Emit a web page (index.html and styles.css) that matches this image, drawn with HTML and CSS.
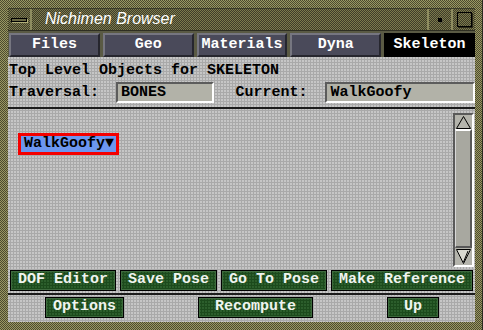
FILE: index.html
```html
<!DOCTYPE html>
<html>
<head>
    <link rel="stylesheet" href="styles.css">
</head>
<body>
<div class="frame">
    <div class="titlebar">
        <div class="menu-btn"><span class="dash"></span></div>
        <div class="title">Nichimen Browser</div>
        <div class="min-btn"><span class="dot"></span></div>
        <div class="max-btn"><span class="box"></span></div>
    </div>

    <div class="tabs">
        <div class="tab">Files</div>
        <div class="tab">Geo</div>
        <div class="tab">Materials</div>
        <div class="tab">Dyna</div>
        <div class="tab active">Skeleton</div>
    </div>

    <div class="panel">
        <div class="heading">Top Level Objects for SKELETON</div>
        <div class="fields">
            <span class="label">Traversal:</span>
            <div class="field traversal">BONES</div>
            <span class="label current">Current:</span>
            <div class="field current-value">WalkGoofy</div>
        </div>
        <div class="rule"></div>

        <div class="list">
            <div class="objects">
                <div class="node">WalkGoofy&#9660;</div>
            </div>
            <div class="scrollbar">
                <svg class="arrow" width="17" height="14" viewBox="0 0 17 14">
                    <polygon points="8.5,1.5 1.5,13.5 15.5,13.5" fill="none" stroke="#000" stroke-width="1"/>
                </svg>
                <div class="thumb"></div>
                <svg class="arrow" width="17" height="17" viewBox="0 0 17 17">
                    <polygon points="1.5,1.5 15.5,1.5 8.5,15.5" fill="#d8d8d0" stroke="#000" stroke-width="1"/>
                    <line x1="13" y1="3" x2="8.5" y2="14" stroke="#000" stroke-width="1"/>
                </svg>
            </div>
        </div>

        <div class="actions">
            <div class="btn">DOF Editor</div>
            <div class="btn">Save Pose</div>
            <div class="btn">Go To Pose</div>
            <div class="btn">Make Reference</div>
        </div>
        <div class="rule tight"></div>
        <div class="footer">
            <div class="btn">Options</div>
            <div class="btn wide">Recompute</div>
            <div class="btn wide">Up</div>
        </div>
    </div>
</div>
</body>
</html>
```

FILE: styles.css
```css
* {
    box-sizing: border-box;
}
body {
    margin: 0;
    background: #6b6a44;
    font-family: "Liberation Mono", "DejaVu Sans Mono", monospace;
    font-weight: bold;
    font-size: 15px;
}
.frame {
    display: flex;
    flex-direction: column;
    width: 483px;
    height: 330px;
    padding: 8px 7px 8px 8px;
    background-color: #7a7a4c;
    background-image: repeating-conic-gradient(#9a9862 0 25%, #4c4a30 0 50%);
    background-size: 2px 2px;
    border-right: 1px solid #2a2a20;
}

/* title bar */
.titlebar {
    display: flex;
    height: 22px;
    background-color: #5e5c3c;
    background-image: repeating-conic-gradient(#7c7a4c 0 25%, #3e3c2a 0 50%);
    background-size: 2px 2px;
    border-top: 1px solid #3a3a28;
}
.menu-btn {
    display: flex;
    align-items: center;
    justify-content: center;
    width: 24px;
    border-right: 2px solid #8e8c60;
}
.dash {
    display: block;
    width: 16px;
    height: 4px;
    border: 1px solid #000;
    background: #6a6844;
    box-shadow: 1px 1px 0 #b0ae78;
}
.title {
    flex: 1;
    padding-left: 13px;
    color: #fff;
    font-family: "Liberation Sans", Arial, sans-serif;
    font-style: italic;
    font-weight: normal;
    font-size: 16px;
    line-height: 20px;
}
.min-btn,
.max-btn {
    display: flex;
    align-items: center;
    justify-content: center;
    width: 24px;
    border-left: 2px solid #8e8c60;
}
.dot {
    display: block;
    width: 4px;
    height: 4px;
    background: #000;
    box-shadow: 1px 1px 0 #5a5840;
}
.box {
    display: block;
    width: 15px;
    height: 15px;
    border: 1px solid #000;
    box-shadow: 1px 1px 0 #2a2818;
}

/* tabs */
.tabs {
    display: flex;
    gap: 3px;
    height: 27px;
    padding: 2px 0 1px 1px;
    background: #5a5a44;
    border-top: 1px solid #2e2e22;
}
.tab {
    width: 91px;
    height: 24px;
    display: flex;
    align-items: center;
    justify-content: center;
    color: #fff;
    background: #4a4a5a;
    border: 2px solid;
    border-color: #767680 #26262e #26262e #767680;
    line-height: 18px;
}
.tab.active {
    background: #000;
    border-color: #000;
}

/* main panel */
.panel {
    flex: 1;
    display: flex;
    flex-direction: column;
    padding-bottom: 4px;
    background-color: #a9a9a9;
    background-image: radial-gradient(circle at 1px 1px, #c6c6c6 0.8px, transparent 1px);
    background-size: 3px 3px;
    color: #000;
}
.heading {
    margin-top: 5px;
    padding-left: 1px;
    line-height: 18px;
}
.fields {
    display: flex;
    align-items: center;
    margin-top: 2px;
    padding-left: 1px;
    height: 21px;
}
.label {
    line-height: 17px;
}
.field {
    height: 21px;
    padding: 0 0 0 3px;
    line-height: 17px;
    background: #b2b2a8;
    border: 2px solid;
    border-color: #5c5c5c #fff #fff #5c5c5c;
}
.traversal {
    width: 100px;
    margin-left: 17px;
}
.current {
    margin-left: 21px;
}
.current-value {
    width: 152px;
    margin-left: 18px;
}
.rule {
    height: 2px;
    margin-top: 4px;
    background: #1c1c1c;
}
.rule.tight {
    margin-top: 2px;
}

/* list */
.list {
    display: flex;
    height: 159px;
}
.objects {
    flex: 1;
    padding: 24px 0 0 10px;
}
.node {
    display: inline-block;
    height: 22px;
    padding: 0 2px 0 3px;
    line-height: 16px;
    background: #6c96f0;
    border: 3px solid #f40000;
    color: #000;
}
.scrollbar {
    display: flex;
    flex-direction: column;
    width: 21px;
    margin: 4px 1px 1px 0;
    border: 2px solid;
    border-color: #5a5a5a #fff #fff #5a5a5a;
    background: #b4b4ac;
}
.arrow {
    display: block;
}
.thumb {
    flex: 1;
    border-top: 2px solid #fff;
    border-left: 1px solid #d8d8d8;
    border-right: 2px solid #585858;
    border-bottom: 2px solid #585858;
    background: #a8a8a0;
}

/* buttons */
.actions {
    display: flex;
    gap: 4px;
    margin-top: 2px;
    padding-left: 2px;
}
.footer {
    display: flex;
    gap: 74px;
    margin-top: 2px;
    padding-left: 37px;
}
.btn {
    height: 21px;
    padding: 0 7px;
    line-height: 17px;
    color: #f0f4f0;
    background-color: #1c4a1c;
    background-image: radial-gradient(circle at 1px 1px, #2c5e2c 0.8px, transparent 1px);
    background-size: 3px 3px;
    border: 1px solid #000;
    box-shadow: inset 0 0 0 1px #3e6a3e;
    white-space: nowrap;
}
.btn.wide {
    padding: 0 16px;
}
```
